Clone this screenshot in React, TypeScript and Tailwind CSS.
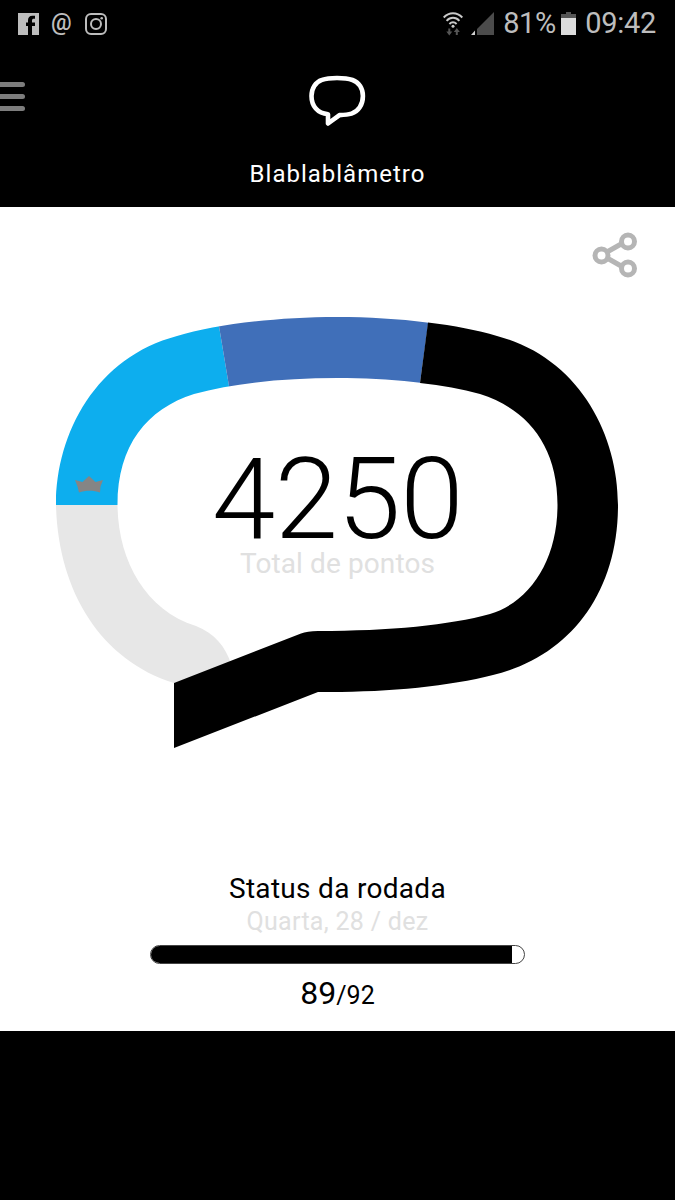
import type { ReactNode } from 'react'
import clsx from 'clsx'

const round = { current: 89, total: 92 }
const points = 4250

function StatusBar() {
  return (
    <div className="flex h-[47px] items-center justify-between pr-[19px] pl-[18px] text-[#bdbdbd]">
      <div className="flex items-center gap-[13px]">
        <svg width="21" height="22" viewBox="0 0 21 22" fill="currentColor">
          <path d="M0 0h21v22h-7v-9h3v-3.500h-3V7.500c0-1.300.6-1.800 1.800-1.800H17V2.700h-2.600C11.500 2.700 10 4.500 10 7.200v2.300H8V13h2v9H0z" />
        </svg>
        <div className="w-[20px] text-center font-['Roboto'] text-[23px] leading-[22px] font-medium">
          <span className="relative -top-px -left-px">@</span>
        </div>
        <svg width="22" height="22" viewBox="0 0 22 22" fill="none" stroke="currentColor">
          <rect x="1" y="1" width="20" height="20" rx="5" strokeWidth="2" />
          <circle cx="11" cy="11" r="5" strokeWidth="2" />
          <circle cx="16.700" cy="5.200" r="1.300" fill="currentColor" stroke="none" />
        </svg>
      </div>
      <div className="flex items-center">
        <svg width="20" height="24" viewBox="0 0 20 24" fill="none" stroke="#c9c9c9" strokeWidth="1.900">
          <path d="M.7 5.500C6-.2 14-.2 19.300 5.500M3.600 8.800c3.700-4 9.100-4 12.800 0M6.400 12c2.200-2.300 5-2.300 7.200 0" />
          <circle cx="10" cy="14.200" r="1.500" fill="#c9c9c9" stroke="none" />
          <path d="M5.300 16.500v3H3.300l3 4 3-4H7.300v-3zM14.800 23v-3h2l-3-4-3 4h2v3z" fill="#555" stroke="none" />
        </svg>
        <svg width="23" height="23" viewBox="0 0 23 23" className="ml-[8px]">
          <path d="M23 0v23H6V17z" fill="#4b4b4b" />
          <path d="M4 18.500V23H0z" fill="#d0d0d0" />
        </svg>
        <span className="ml-[9px] w-[52px] font-['Roboto'] text-[29px] leading-none tracking-[-0.500px]">81%</span>
        <svg width="15" height="23" viewBox="0 0 15 23" className="ml-[6px]">
          <path d="M0 2h5V0h5v2h5v5H0z" fill="#555" />
          <path d="M0 6h15v17H0z" fill="#dcdcdc" />
        </svg>
        <span className="ml-[9px] font-['Roboto'] text-[29px] leading-none tracking-[-0.300px]">09:42</span>
      </div>
    </div>
  )
}

function Header() {
  return (
    <header className="relative flex h-[160px] flex-col items-center pt-[28px] text-white">
      <button aria-label="Menu" className="absolute top-[35px] left-0 grid gap-[7px]">
        <span className="h-[5px] w-[25px] rounded-r-full bg-[#7d7d7d]" />
        <span className="h-[5px] w-[25px] rounded-r-full bg-[#7d7d7d]" />
        <span className="h-[5px] w-[25px] rounded-r-full bg-[#7d7d7d]" />
      </button>
      <svg
        width="59"
        height="53"
        viewBox="0 0 59 53"
        fill="none"
        stroke="white"
        strokeWidth="4.600"
        strokeLinejoin="round"
      >
        <path d="M29 3c6 0 11 .4 15.500 2 6.500 2.300 10.400 8.500 10.400 16 0 8.800-4.500 15.500-11.400 17.600-3.500 1-7.500 1.300-12 1.500L20 48.500v-9.300C9.500 38.500 3.500 31 3.500 21c0-7.500 3.900-14 10.500-16.100 4.500-1.600 9-1.900 15-1.900z" />
      </svg>
      <h1 className="mt-[31px] font-['Roboto'] text-[24px] leading-[30px] tracking-[1px]">Blablablâmetro</h1>
    </header>
  )
}

function ShareIcon() {
  return (
    <svg width="46" height="46" viewBox="0 0 46 46" fill="none" stroke="#b5b5b5" strokeWidth="5">
      <path d="m15 20 15-8.500M15 26l15 8.500" />
      <circle cx="9.500" cy="23.500" r="6.500" />
      <circle cx="36" cy="9.500" r="6.500" />
      <circle cx="36" cy="36.500" r="6.500" />
    </svg>
  )
}

function Bubble() {
  return (
    <svg width="565" height="434" viewBox="55 316 565 434" className="block">
      <defs>
        <clipPath id="arch">
          <path d="M56 505C56 432 97 357 177 336C214 325 274 317 337 317S460 325 497 336V394H480C440 383 390 378 337 378S234 383 194 394C147 409 117.500 445 117.500 505z" />
        </clipPath>
      </defs>
      <path
        d="M56 505C58 590 100 660 174 683L231 664C226 647 214 633 196 626C145 610 118 560 117.500 505z"
        fill="#e7e7e7"
      />
      <g clipPath="url(#arch)">
        <path d="M50 310H216.300L231 398V505H50z" fill="#0daeee" />
        <path d="M216.300 310H430L418.500 394H230.300z" fill="#406fb9" />
      </g>
      {/* crown marking the record */}
      <path
        d="m75 480 7.500 2 6.500-6 6.500 6 7.500-2-2.500 6.500-.5 6c-6-2.500-15-2.500-21 0l-1.500-6z"
        fill="#858585"
      />
      <path
        d="M428 322.500C454 325.500 477 330 497 336C577 357 618 432 618 505C618 595 568 657 493 675C450 686 390 692 330 692H318L174 748V683L301 633.500Q307 631 318 631C390 631 450 625 490 614C530 602 557.500 560 557.500 505C557.500 445 527 409 480 394C462 389 442 385.500 420 383z"
        fill="#000"
      />
    </svg>
  )
}

function Label({ className, children }: { className?: string; children: ReactNode }) {
  return <div className={clsx("font-['Roboto'] whitespace-nowrap", className)}>{children}</div>
}

function RoundStatus() {
  const percent = (round.current / round.total) * 100

  return (
    <section className="mt-[121px] flex flex-col items-center">
      <Label className="text-[28px] leading-[36px] tracking-[0.300px] text-black">Status da rodada</Label>
      <Label className="text-[25px] leading-[30px] tracking-[0.300px] text-[#e0e0e0]">Quarta, 28 / dez</Label>
      <div className="mt-[8px] h-[19px] w-[375px] overflow-hidden rounded-full border border-[#444]">
        <div className="h-full bg-black" style={{ width: `${percent}%` }} />
      </div>
      <Label className="mt-[10px] leading-[38px] text-black">
        <span className="text-[32px]">{round.current}</span>
        <span className="text-[25px]">/{round.total}</span>
      </Label>
    </section>
  )
}

export default function App() {
  return (
    <div className="h-[1200px] w-[675px] overflow-hidden bg-black">
      <StatusBar />
      <Header />
      <main className="flex h-[824px] flex-col items-center bg-white">
        <div className="flex w-full justify-end pt-[25px] pr-[37px]">
          <button aria-label="Compartilhar">
            <ShareIcon />
          </button>
        </div>
        <div className="relative mt-[38px]">
          <Bubble />
          <div className="absolute inset-x-0 top-[135px] flex flex-col items-center">
            <Label className="text-[114px] leading-[96px] font-light tracking-[-0.500px] text-black">{points}</Label>
            <Label className="mt-px text-[28px] leading-[32px] tracking-[0.100px] text-[#e0e0e0]">Total de pontos</Label>
          </div>
        </div>
        <RoundStatus />
      </main>
    </div>
  )
}
